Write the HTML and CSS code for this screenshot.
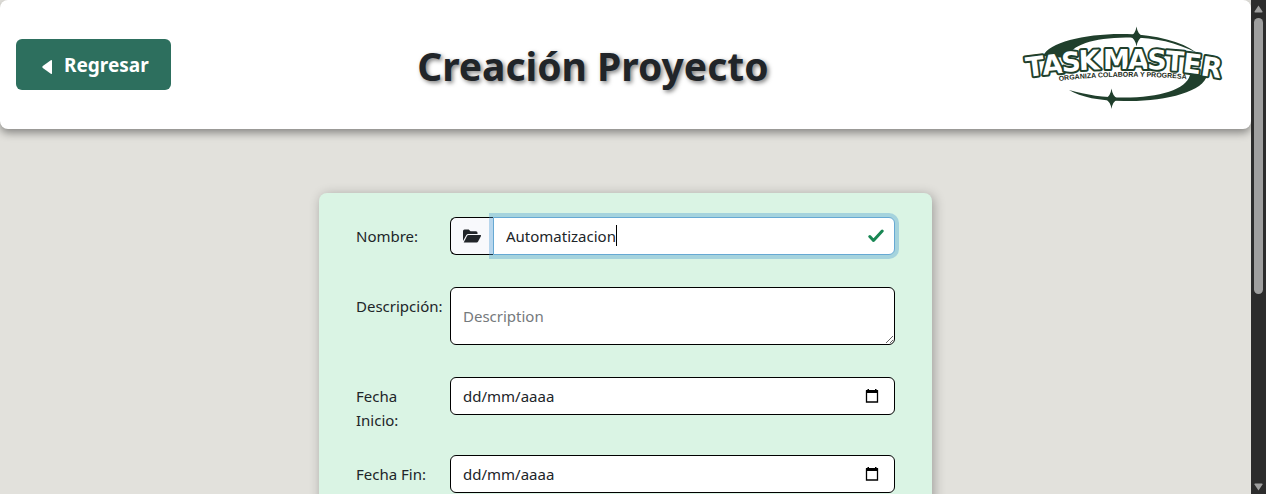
FILE: index.html
```html
<!DOCTYPE html>
<html lang="es">
<head>
<meta charset="utf-8">
<meta name="viewport" content="width=device-width, initial-scale=1">
<title>Creación Proyecto</title>
<link rel="stylesheet" href="styles.css">
</head>
<body class="window">
<div class="page">
  <header class="header">
    <button type="button" class="back">
      <svg class="back-icon" viewBox="0 0 10 16" aria-hidden="true"><path d="M10 1.800v12.400q0 1.300-1.200.5L.8 9q-1-1 0-2l8-5.700Q10 .5 10 1.800z" fill="#fff"/></svg>
      Regresar
    </button>
    <h1 class="title">Creación Proyecto</h1>
    <svg class="logo" viewBox="0 0 220 97" role="img" aria-label="Task Master: organiza, colabora y progresa">
      <g fill="#203f2c">
        <path d="M28 40C34 26 72 17 112 18c29 1 54 7 70 19C160 26 139 21 111 21.500 78 22 56 29 52 42z"/>
        <path d="M54 74c18 5 34 7.500 55 7.500 36 0 62-8 66-22.500h17c-3 17-43 27-83 26-25 0-43-4-55-11z"/>
        <path d="M121.500 10.500q1 7.500 6.500 10-5.500 2.500-6.500 10-1-7.500-6.500-10 5.500-2.500 6.500-10zM96.500 72.500q1 8 6.500 10.500-5.500 2.500-6.500 10-1-7.500-6.500-10 5.500-2.500 6.500-10.500z"/>
      </g>
      <text class="logo-name" x="12 28 47 64 82 88 113 132 150 167 185" y="61 59 56 54 54 53 53 53 54 56 59" rotate="-7 -6 -4 -2 0 0 0 2 4 7 9">TASK MASTER</text>
      <path id="motto-line" d="M44 65Q110 57 180 64" fill="none"/>
      <text class="logo-motto"><textPath href="#motto-line">ORGANIZA COLABORA Y PROGRESA</textPath></text>
    </svg>
  </header>

  <form class="card">
    <div class="row row-tall">
      <label class="label" for="nombre">Nombre:</label>
      <div class="group">
        <span class="addon">
          <svg class="folder" viewBox="0 0 18 14" aria-hidden="true"><path d="M0 12V2Q0 .5 1.500.5h4.200L7.500 2.300H13q1.500 0 1.500 1.500V5H5.200q-1.300 0-2 1.200z" fill="#212529"/><path d="M.7 13.500 4 7q.5-.9 1.500-.9h12q1 0 .5 1l-2.900 5.500q-.5.900-1.500.9z" fill="#212529"/></svg>
        </span>
        <input class="control control-active" id="nombre" type="text" value="Automatizacion">
        <span class="caret"></span>
        <svg class="check" viewBox="0 0 16 14" aria-hidden="true"><path d="M1.800 7.500 5.500 11.500 14.200 2" fill="none" stroke="#198754" stroke-width="3" stroke-linecap="round" stroke-linejoin="round"/></svg>
      </div>
    </div>
    <div class="row row-tall">
      <label class="label" for="descripcion">Descripción:</label>
      <textarea class="control area" id="descripcion" placeholder="Description"></textarea>
    </div>
    <div class="row">
      <label class="label" for="inicio">Fecha Inicio:</label>
      <div class="group">
        <input class="control date" id="inicio" type="text" placeholder="dd/mm/aaaa">
        <button type="button" class="picker" aria-label="Elegir fecha de inicio"><svg class="calendar" viewBox="0 0 14 16" aria-hidden="true"><path d="M1.500 3h11v11h-11z" fill="none" stroke="#000" stroke-width="1.300"/><path d="M1 2h12v3H1zM2.500 1H4v2H2.500zM10 1h1.500v2H10z"/></svg></button>
      </div>
    </div>
    <div class="row">
      <label class="label" for="fin">Fecha Fin:</label>
      <div class="group">
        <input class="control date" id="fin" type="text" placeholder="dd/mm/aaaa">
        <button type="button" class="picker" aria-label="Elegir fecha de fin"><svg class="calendar" viewBox="0 0 14 16" aria-hidden="true"><path d="M1.500 3h11v11h-11z" fill="none" stroke="#000" stroke-width="1.300"/><path d="M1 2h12v3H1zM2.500 1H4v2H2.500zM10 1h1.500v2H10z"/></svg></button>
      </div>
    </div>
  </form>
</div>
<div class="scrollbar" aria-hidden="true">
  <svg class="arrow" viewBox="0 0 9 8"><path d="M4.500.5 8.500 6.500q.3 1-.7 1H1.200q-1 0-.7-1z" fill="#9f9f9f"/></svg>
  <div class="track"><div class="thumb"></div></div>
  <svg class="arrow" viewBox="0 0 9 8"><path d="M4.500 7.500.5 1.500Q.2.500 1.200.5h6.600q1 0 .7 1z" fill="#9f9f9f"/></svg>
</div>
</body>
</html>
```
FILE: styles.css
```css
* {
  box-sizing: border-box;
}

.window {
  display: flex;
  height: 100vh;
  margin: 0;
  overflow: hidden;
  background: #e2e1dc;
  color: #212529;
  font: 15px/24px "Noto Sans", "Open Sans", sans-serif;
}

.page {
  flex: 1;
  min-width: 0;
  overflow: hidden;
}

.header {
  display: flex;
  align-items: center;
  justify-content: space-between;
  padding: 16px;
  background: #fff;
  border-radius: 8px;
  box-shadow: 0 4px 8px rgba(0, 0, 0, 0.4);
}

.back {
  display: flex;
  align-items: center;
  gap: 12px;
  padding: 11px 22px 10px 26px;
  border: 0;
  border-radius: 6px;
  background: #2d6f5e;
  color: #fff;
  font: 700 19px/30px "Noto Sans", "Open Sans", sans-serif;
}

.back-icon {
  width: 10px;
  height: 16px;
  margin-top: 3px;
}

.title {
  margin: 0;
  padding-top: 2px;
  font-size: 39px;
  line-height: 48px;
  font-weight: 700;
  text-shadow: 2px 2px 4px rgba(0, 0, 0, 0.5);
}

.logo {
  width: 220px;
  height: 97px;
}

.logo-name {
  fill: #fff;
  stroke: #203f2c;
  stroke-width: 4px;
  stroke-linejoin: round;
  paint-order: stroke;
  font: 700 27px "DejaVu Sans", sans-serif;
}

.logo-motto {
  fill: #1c2a20;
  font: 700 7px "Liberation Sans", sans-serif;
}

.card {
  width: 49%;
  margin: 64px auto;
  padding: 24px 37px;
  border-radius: 8px;
  background: #daf4e4;
  box-shadow: 2px 2px 12px rgba(0, 0, 0, 0.3);
}

.row {
  display: grid;
  grid-template-columns: 86px 1fr;
  column-gap: 8px;
  align-items: start;
  margin-bottom: 16px;
}

.row-tall {
  margin-bottom: 32px;
}

.label {
  padding: 7px 0;
}

.group {
  position: relative;
  display: flex;
}

.control {
  width: 100%;
  min-width: 0;
  height: 38px;
  padding: 6px 12px;
  border: 1px solid #000;
  border-radius: 6px;
  outline: 0;
  background: #fff;
  color: #212529;
  font: inherit;
}

.control::placeholder {
  color: #75797c;
  opacity: 1;
}

.date::placeholder {
  color: #212529;
}

.control-active {
  flex: 1;
  border-color: #67a9d3;
  border-radius: 0 6px 6px 0;
  box-shadow: 0 0 0 4px rgba(65, 150, 210, 0.35);
}

.addon {
  display: flex;
  align-items: center;
  padding: 0 12px;
  border: 1px solid #000;
  border-right: 0;
  border-radius: 6px 0 0 6px;
  background: #f8f9fc;
}

.folder {
  width: 18px;
  height: 14px;
}

.caret {
  position: absolute;
  left: 166px;
  top: 8px;
  width: 1px;
  height: 21px;
  background: #000;
}

.check {
  position: absolute;
  right: 11px;
  top: 12px;
  width: 16px;
  height: 14px;
}

.area {
  display: block;
  height: 58px;
  padding: 16px 12px;
  resize: vertical;
}

.picker {
  position: absolute;
  right: 16px;
  top: 11px;
  display: flex;
  padding: 0;
  border: 0;
  background: none;
}

.calendar {
  width: 14px;
  height: 16px;
}

.scrollbar {
  display: flex;
  flex-direction: column;
  align-items: center;
  gap: 5px;
  width: 15px;
  padding: 5px 0 3px;
  background: #2c2c2c;
}

.arrow {
  width: 9px;
  height: 8px;
}

.track {
  flex: 1;
}

.thumb {
  width: 9px;
  height: 60%;
  border-radius: 5px;
  background: #9f9f9f;
}
```
